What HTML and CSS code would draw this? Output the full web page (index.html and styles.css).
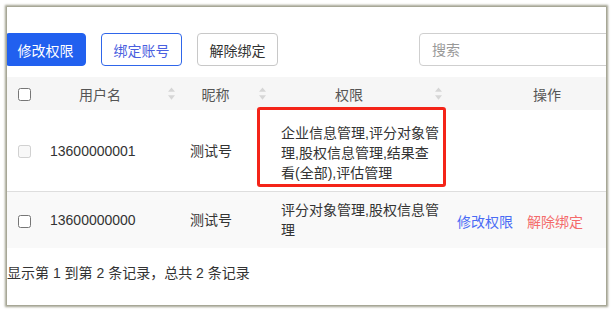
FILE: index.html
```html
<!DOCTYPE html>
<html lang="zh-CN">
<head>
    <meta charset="UTF-8">
    <title>账号权限</title>
    <link rel="stylesheet" href="styles.css">
</head>
<body>

<div class="panel">
    <div class="toolbar">
        <button class="btn btn-primary first">修改权限</button>
        <button class="btn btn-outline">绑定账号</button>
        <button class="btn btn-default">解除绑定</button>
        <input class="search" type="text" placeholder="搜索">
    </div>

    <table class="table">
        <colgroup>
            <col class="c-check">
            <col class="c-user">
            <col class="c-nick">
            <col class="c-perm">
            <col class="c-op">
        </colgroup>
        <thead>
            <tr>
                <th class="check"><input type="checkbox"></th>
                <th><div class="th-inner"><span class="label">用户名</span><svg class="sort" viewBox="0 0 8 14"><path d="M4 0L8 5H0Z M4 14L8 9H0Z"/></svg></div></th>
                <th><div class="th-inner"><span class="label">昵称</span><svg class="sort" viewBox="0 0 8 14"><path d="M4 0L8 5H0Z M4 14L8 9H0Z"/></svg></div></th>
                <th><div class="th-inner"><span class="label">权限</span><svg class="sort" viewBox="0 0 8 14"><path d="M4 0L8 5H0Z M4 14L8 9H0Z"/></svg></div></th>
                <th><div class="th-inner"><span class="label">操作</span></div></th>
            </tr>
        </thead>
        <tbody>
            <tr class="row-first">
                <td class="check"><input type="checkbox" disabled></td>
                <td>13600000001</td>
                <td>测试号</td>
                <td class="perm">
                    <!-- 标注框 -->
                    <div class="mark"></div>
                    企业信息管理,评分对象管理,股权信息管理,结果查看(全部),评估管理
                </td>
                <td></td>
            </tr>
            <tr class="row-odd">
                <td class="check"><input type="checkbox"></td>
                <td>13600000000</td>
                <td>测试号</td>
                <td class="perm">评分对象管理,股权信息管理</td>
                <td class="ops"><a href="#" class="link-edit">修改权限</a><a href="#" class="link-del">解除绑定</a></td>
            </tr>
        </tbody>
    </table>

    <p class="pager">显示第 1 到第 2 条记录，总共 2 条记录</p>
</div>

</body>
</html>
```

FILE: styles.css
```css
body, html {
    margin: 0;
    padding: 0;
    background-color: #ffffff;
    font-family: "Liberation Sans", "Noto Sans CJK SC", sans-serif;
    font-size: 14px;
    color: #333;
}
.panel {
    margin: 7px;
    width: 599px;
    height: 298px;
    overflow: hidden;
    background-color: #fff;
    box-shadow: 0 0 2px 2px rgba(130, 130, 105, 0.75);
}
.toolbar {
    display: flex;
    align-items: center;
    gap: 15px;
    padding-top: 26px;
    white-space: nowrap;
}
.btn {
    height: 33px;
    width: 81px;
    flex: none;
    box-sizing: border-box;
    border-radius: 4px;
    font-family: inherit;
    font-size: 14px;
    padding: 0;
    cursor: pointer;
}
.btn.first {
    margin-left: -2px;
}
.btn-primary {
    background-color: #2160ef;
    border: 1px solid #2160ef;
    color: #fff;
}
.btn-outline {
    background-color: #fff;
    border: 1px solid #2f66ea;
    color: #4a5fe0;
}
.btn-default {
    background-color: #fff;
    border: 1px solid #c8c8c8;
    color: #333;
}
.search {
    margin-left: 126px;
    flex: none;
    width: 220px;
    height: 33px;
    box-sizing: border-box;
    border: 1px solid #cfcfcf;
    border-radius: 4px;
    padding: 0 12px;
    font-family: inherit;
    font-size: 14px;
}
.search::placeholder {
    color: #999;
}
.table {
    margin-top: 11px;
    border-collapse: collapse;
    table-layout: fixed;
    width: 654px;
}
.c-check { width: 35px; }
.c-user { width: 140px; }
.c-nick { width: 91px; }
.c-perm { width: 176px; }
.c-op { width: 212px; }
.table th {
    height: 33px;
    padding: 0;
    background-color: #f6f6f6;
    font-weight: normal;
    color: #555;
}
.th-inner {
    display: flex;
    align-items: center;
    padding: 0 6px 0 8px;
}
.th-inner .label {
    flex: 1;
    text-align: center;
    margin-right: 18px;
}
.sort {
    width: 7px;
    height: 13px;
    flex: none;
    margin-right: 1px;
    fill: #d6d6d6;
}
.table td {
    padding: 0 8px;
    line-height: 20px;
    vertical-align: middle;
}
.table .check {
    text-align: center;
    padding: 0;
}
.check input {
    margin: 0;
    width: 13px;
    height: 13px;
    vertical-align: middle;
}
.row-first td {
    height: 77px;
    border-bottom: 1px solid #dedede;
}
.row-first .perm {
    padding-top: 4px;
}
.row-odd td {
    height: 52px;
    background-color: #f9f9f9;
}
.perm {
    position: relative;
}
.mark {
    position: absolute;
    left: -16px;
    right: 3px;
    top: -3px;
    bottom: 4px;
    border: 3px solid #f42418;
    border-radius: 3px;
}
.ops {
    padding-top: 4px !important;
}
.ops a {
    text-decoration: none;
    margin-right: 14px;
}
.link-edit {
    color: #4a6cf5;
}
.link-del {
    color: #f46b6b;
}
.pager {
    margin: 15px 0 0 0;
    line-height: 20px;
}
```
